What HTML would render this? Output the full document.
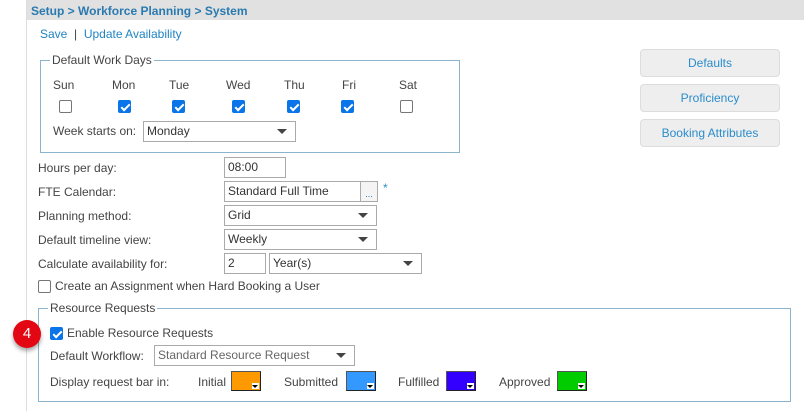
<!DOCTYPE html>
<html><head><style>
*{box-sizing:border-box;margin:0;padding:0}
body{width:804px;height:411px;background:#fff;font-family:"Liberation Sans",sans-serif;font-size:12px;color:#444;position:relative;overflow:hidden}
.a{position:absolute;white-space:nowrap}
.lnk{color:#2084c4}
.cb{position:absolute;width:13px;height:13px;border:1px solid #767676;border-radius:2px;background:#fff}
.cb.on{background:#0a75e8;border-color:#0a75e8}
.cb.on:after{content:"";position:absolute;left:3.5px;top:0.5px;width:3px;height:7px;border:solid #fff;border-width:0 2px 2px 0;transform:rotate(45deg)}
.box{position:absolute;border:1px solid #aaa;background:#fff;padding-left:3px;line-height:18px;font-size:12px;color:#333}
.sel:after{content:"";position:absolute;right:8px;top:7px;border-left:5px solid transparent;border-right:5px solid transparent;border-top:5px solid #444}
.fs{position:absolute;border:1px solid #8db4cf}
.lg{position:absolute;background:#fff;padding:0 2px;line-height:14px}
.btn{position:absolute;left:640px;width:140px;height:28px;background:#eee;border:1px solid #ddd;border-radius:4px;color:#2a8ccc;text-align:center;line-height:26px;font-size:12px}
.sw{position:absolute;top:371px;width:30px;height:20px;border:1px solid #555;border-right-color:#222;border-bottom-color:#222}
.sw:after{content:"";position:absolute;right:1px;bottom:1px;width:7px;height:6px;background:#fff}
.sw:before{content:"";position:absolute;right:2px;bottom:2px;z-index:1;border-left:3px solid transparent;border-right:3px solid transparent;border-top:3px solid #000}
</style></head><body>
<div class="a" style="left:26px;top:0;width:1px;height:411px;background:#ddd"></div>
<div class="a" style="left:27px;top:0;width:777px;height:20px;background:#e1e1e1"></div>
<div class="a lnk" style="left:31px;top:4px;font-size:12px;font-weight:bold;color:#2a7ab0">Setup &gt; Workforce Planning &gt; System</div>
<div class="a" style="left:40px;top:27px"><span class="lnk">Save</span> &nbsp;| &nbsp;<span class="lnk">Update Availability</span></div>

<div class="fs" style="left:40px;top:60px;width:420px;height:93px"></div>
<div class="lg a" style="left:50px;top:53px">Default Work Days</div>
<div class="a" style="left:53px;top:78px">Sun</div>
<div class="a" style="left:112px;top:78px">Mon</div>
<div class="a" style="left:169px;top:78px">Tue</div>
<div class="a" style="left:226px;top:78px">Wed</div>
<div class="a" style="left:284px;top:78px">Thu</div>
<div class="a" style="left:342px;top:78px">Fri</div>
<div class="a" style="left:399px;top:78px">Sat</div>
<div class="cb" style="left:59px;top:100px"></div>
<div class="cb on" style="left:118px;top:100px"></div>
<div class="cb on" style="left:172px;top:100px"></div>
<div class="cb on" style="left:232px;top:100px"></div>
<div class="cb on" style="left:287px;top:100px"></div>
<div class="cb on" style="left:341px;top:100px"></div>
<div class="cb" style="left:400px;top:100px"></div>
<div class="a" style="left:53px;top:124px">Week starts on:</div>
<div class="box sel" style="left:143px;top:121px;width:153px;height:21px">Monday</div>

<div class="btn" style="top:49px">Defaults</div>
<div class="btn" style="top:84px">Proficiency</div>
<div class="btn" style="top:119px">Booking Attributes</div>

<div class="a" style="left:38px;top:161px">Hours per day:</div>
<div class="box" style="left:224px;top:157px;width:62px;height:21px">08:00</div>
<div class="a" style="left:38px;top:185px">FTE Calendar:</div>
<div class="box" style="left:224px;top:181px;width:137px;height:21px">Standard Full Time</div>
<div class="box" style="left:360px;top:181px;width:18px;height:21px;background:#f4f4f4;font-size:9px;color:#2a7ab0;text-align:center;padding:0;line-height:24px">...</div>
<div class="a" style="left:383px;top:181px;color:#2a8ccc">*</div>
<div class="a" style="left:38px;top:209px">Planning method:</div>
<div class="box sel" style="left:224px;top:205px;width:153px;height:21px">Grid</div>
<div class="a" style="left:38px;top:233px">Default timeline view:</div>
<div class="box sel" style="left:224px;top:229px;width:153px;height:21px">Weekly</div>
<div class="a" style="left:38px;top:257px">Calculate availability for:</div>
<div class="box" style="left:224px;top:253px;width:42px;height:21px">2</div>
<div class="box sel" style="left:269px;top:253px;width:153px;height:21px">Year(s)</div>
<div class="cb" style="left:38px;top:280px"></div>
<div class="a" style="left:55px;top:279px">Create an Assignment when Hard Booking a User</div>

<div class="fs" style="left:38px;top:308px;width:753px;height:94px"></div>
<div class="lg a" style="left:48px;top:301px">Resource Requests</div>
<div class="a" style="left:13px;top:320px;width:28px;height:28px;border-radius:50%;background:#e30613;box-shadow:0 3px 4px rgba(0,0,0,.35);color:#fff;font-size:15px;text-align:center;line-height:28px">4</div>
<div class="cb on" style="left:50px;top:327px"></div>
<div class="a" style="left:67px;top:326px">Enable Resource Requests</div>
<div class="a" style="left:50px;top:349px">Default Workflow:</div>
<div class="box sel" style="left:154px;top:345px;width:201px;height:21px;color:#666">Standard Resource Request</div>
<div class="a" style="left:50px;top:375px">Display request bar in:</div>
<div class="a" style="left:198px;top:375px">Initial</div>
<div class="sw" style="left:231px;background:#ff9900"></div>
<div class="a" style="left:284px;top:375px">Submitted</div>
<div class="sw" style="left:346px;background:#3399ff"></div>
<div class="a" style="left:398px;top:375px">Fulfilled</div>
<div class="sw" style="left:446px;background:#3300ff"></div>
<div class="a" style="left:499px;top:375px">Approved</div>
<div class="sw" style="left:557px;background:#00cc00"></div>
</body></html>
